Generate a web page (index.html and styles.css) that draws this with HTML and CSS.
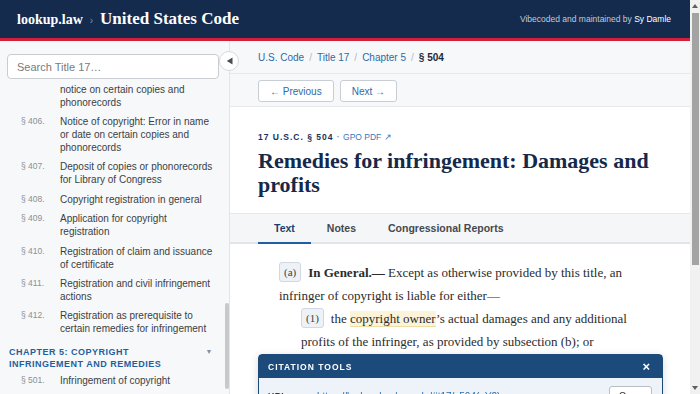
FILE: index.html
```html
<!DOCTYPE html>
<html lang="en">
<head>
  <meta charset="UTF-8" />
  <title>17 U.S.C. § 504 - lookup.law</title>
  <link rel="stylesheet" href="styles.css">
</head>
<body>
  <header class="topbar">
    <div class="brand">
      <a class="site" href="#">lookup.law</a>
      <span class="sep">›</span>
      <span class="code-title">United States Code</span>
    </div>
    <div class="credit">Vibecoded and maintained by <a href="#">Sy Damle</a></div>
  </header>

  <div class="layout">
    <aside class="sidebar">
      <div class="search">
        <input type="text" placeholder="Search Title 17…" />
      </div>
      <button class="collapse" title="Hide sidebar">
        <svg width="8" height="8" viewBox="0 0 8 8"><path d="M6.5 0.5v7L0.8 4z" fill="#4a4f57"/></svg>
      </button>

      <div class="toc" id="toc">
        <div class="chapter closed"><span>Chapter 1: Subject matter and scope of copyright</span><i>▶</i></div>
        <div class="chapter closed"><span>Chapter 2: Copyright ownership and transfer</span><i>▶</i></div>
        <div class="chapter closed"><span>Chapter 3: Duration of copyright</span><i>▶</i></div>
        <div class="chapter"><span>Chapter 4: Copyright notice, deposit, and registration</span><i>▼</i></div>
        <a class="toc-item" href="#"><span class="num">§ 401.</span><span class="name">Notice of copyright: Visually perceptible copies</span></a>
        <a class="toc-item" href="#"><span class="num">§ 402.</span><span class="name">Notice of copyright: Phonorecords of sound recordings</span></a>
        <a class="toc-item" href="#"><span class="num">§ 403.</span><span class="name">Notice of copyright: Publications incorporating United States Government works</span></a>
        <a class="toc-item" href="#"><span class="num">§ 404.</span><span class="name">Notice of copyright: Contributions to collective works</span></a>
        <a class="toc-item" href="#" id="s405"><span class="num">§ 405.</span><span class="name">Notice of copyright: Omission of notice on certain copies and phonorecords</span></a>
        <a class="toc-item" href="#"><span class="num">§ 406.</span><span class="name">Notice of copyright: Error in name or date on certain copies and phonorecords</span></a>
        <a class="toc-item" href="#"><span class="num">§ 407.</span><span class="name">Deposit of copies or phonorecords for Library of Congress</span></a>
        <a class="toc-item" href="#"><span class="num">§ 408.</span><span class="name">Copyright registration in general</span></a>
        <a class="toc-item" href="#"><span class="num">§ 409.</span><span class="name">Application for copyright registration</span></a>
        <a class="toc-item" href="#"><span class="num">§ 410.</span><span class="name">Registration of claim and issuance of certificate</span></a>
        <a class="toc-item" href="#"><span class="num">§ 411.</span><span class="name">Registration and civil infringement actions</span></a>
        <a class="toc-item" href="#"><span class="num">§ 412.</span><span class="name">Registration as prerequisite to certain remedies for infringement</span></a>
        <div class="chapter"><span>Chapter 5: Copyright infringement and remedies</span><i>▼</i></div>
        <a class="toc-item" href="#"><span class="num">§ 501.</span><span class="name">Infringement of copyright</span></a>
        <a class="toc-item" href="#"><span class="num">§ 502.</span><span class="name">Remedies for infringement: Injunctions</span></a>
        <a class="toc-item" href="#"><span class="num">§ 503.</span><span class="name">Remedies for infringement: Impounding and disposition of infringing articles</span></a>
        <a class="toc-item active" href="#"><span class="num">§ 504.</span><span class="name">Remedies for infringement: Damages and profits</span></a>
        <a class="toc-item" href="#"><span class="num">§ 505.</span><span class="name">Remedies for infringement: Costs and attorney's fees</span></a>
        <a class="toc-item" href="#"><span class="num">§ 506.</span><span class="name">Criminal offenses</span></a>
        <a class="toc-item" href="#"><span class="num">§ 507.</span><span class="name">Limitations on actions</span></a>
        <a class="toc-item" href="#"><span class="num">§ 508.</span><span class="name">Notification of filing and determination of actions</span></a>
        <div class="chapter closed"><span>Chapter 6: Importation and exportation</span><i>▶</i></div>
      </div>
      <div class="toc-thumb"></div>
    </aside>

    <main class="content">
      <div class="crumbs">
        <a href="#">U.S. Code</a><span class="slash">/</span>
        <a href="#">Title 17</a><span class="slash">/</span>
        <a href="#">Chapter 5</a><span class="slash">/</span>
        <strong>§ 504</strong>
      </div>

      <div class="pager">
        <button class="btn">← Previous</button>
        <button class="btn">Next →</button>
      </div>

      <div class="section-head">
        <div class="meta">17 U.S.C. § 504 <span class="dot">·</span> <a href="#">GPO PDF ↗</a></div>
        <h1>Remedies for infringement: Damages and profits</h1>
      </div>

      <div class="tabs">
        <a class="tab active" href="#">Text</a>
        <a class="tab" href="#">Notes</a>
        <a class="tab" href="#">Congressional Reports</a>
      </div>

      <div class="statute">
        <p class="para"><span class="mark">(a)</span><b>In General.—</b> Except as otherwise provided by this title, an infringer of copyright is liable for either—</p>
        <p class="para sub"><span class="mark">(1)</span>the <span class="term">copyright owner</span>’s actual damages and any additional profits of the infringer, as provided by subsection (b); or</p>
        <p class="para sub"><span class="mark">(2)</span>statutory damages, as provided by subsection (c).</p>
        <p class="para"><span class="mark">(b)</span><b>Actual Damages and Profits.—</b> The <span class="term">copyright owner</span> is entitled to recover the actual damages suffered by him or her as a result of the infringement, and any profits of the infringer that are attributable to the infringement and are not taken into account in computing the actual damages.</p>
      </div>
    </main>
  </div>

  <div class="cite-panel">
    <div class="cite-head"><span>Citation Tools</span><span class="close">×</span></div>
    <div class="cite-row">
      <span class="cite-label">URL</span>
      <a class="cite-url" href="#">https://lookup.law/uscode/#t17/s504(a)(2)</a>
      <button class="copy">Copy</button>
    </div>
  </div>

  <div class="page-scroll">
    <span class="arrow up"></span>
    <span class="thumb"></span>
    <span class="arrow down"></span>
  </div>

  <script>
    const toc = document.getElementById("toc");
    const start = document.getElementById("s405");
    toc.scrollTop = start.offsetTop + 16;
  </script>
</body>
</html>
```

FILE: styles.css
```css
body {
  margin: 0 10px 0 0;
  font-family: "Liberation Sans", Arial, sans-serif;
  color: #222;
  background: #fff;
}

/* page scrollbar */
.page-scroll {
  position: fixed;
  top: 0;
  right: 0;
  width: 10px;
  height: 100vh;
  z-index: 5;
  background: #f1f1f1;
  display: flex;
  flex-direction: column;
  align-items: center;
}
.page-scroll .arrow {
  width: 0;
  height: 0;
  border-left: 3px solid transparent;
  border-right: 3px solid transparent;
}
.page-scroll .up {
  margin-top: 4px;
  border-bottom: 4px solid #5f5f5f;
}
.page-scroll .down {
  margin-top: auto;
  margin-bottom: 4px;
  border-top: 4px solid #5f5f5f;
}
.page-scroll .thumb {
  width: 7px;
  height: 252px;
  margin-top: 5px;
  background: #a3a3a3;
}

/* header */
.topbar {
  height: 38px;
  background: #152b4e;
  border-bottom: 3px solid #d31f3a;
  display: flex;
  align-items: center;
  justify-content: space-between;
  padding: 0 19px 0 17px;
}
.brand {
  display: flex;
  align-items: baseline;
  font-family: "Liberation Serif", serif;
  font-weight: bold;
  color: #fff;
}
.site {
  font-size: 14px;
  color: #fff;
  text-decoration: none;
}
.sep {
  font-family: "Liberation Sans", sans-serif;
  font-weight: normal;
  font-size: 10px;
  color: #8391a8;
  margin: 0 7px;
}
.code-title {
  font-size: 17px;
}
.credit {
  font-size: 8.5px;
  color: #c3cad6;
}
.credit a {
  color: #fff;
  text-decoration: none;
}

.layout {
  display: flex;
}

/* sidebar */
.sidebar {
  width: 229px;
  flex: none;
  height: calc(100vh - 41px);
  position: sticky;
  top: 0;
  z-index: 2;
  display: flex;
  flex-direction: column;
  background: #f7f8f9;
  border-right: 1px solid #e2e5e9;
}
.search {
  padding: 13px 10px 4px 7px;
}
.search input {
  width: 100%;
  box-sizing: border-box;
  height: 25px;
  padding: 0 9px;
  border: 1px solid #c9cdd2;
  border-radius: 4px;
  background: #fff;
  font: 11px "Liberation Sans", Arial, sans-serif;
  color: #333;
}
.search input::placeholder {
  color: #767b82;
}
.collapse {
  position: absolute;
  top: 10px;
  right: -10px;
  width: 20px;
  height: 20px;
  padding: 0 0 0 1px;
  border: 1px solid #d6dadf;
  border-radius: 50%;
  background: #fff;
  display: flex;
  align-items: center;
  justify-content: center;
}

.toc {
  flex: 1;
  min-height: 0;
  overflow-y: auto;
  position: relative;
  padding: 0 8px 0 7px;
  scrollbar-width: none;
}
.toc-thumb {
  position: absolute;
  right: 0;
  top: 262px;
  width: 4px;
  height: 86px;
  border-radius: 2px;
  background: #c6c9cd;
}

.chapter {
  display: flex;
  justify-content: space-between;
  gap: 10px;
  padding: 7px 8px 1px 2px;
  font-size: 9px;
  line-height: 12px;
  font-weight: bold;
  letter-spacing: 0.5px;
  text-transform: uppercase;
  color: #1f5f9f;
}
.chapter span {
  max-width: 160px;
}
.chapter.closed {
  padding-bottom: 6px;
}
.chapter i {
  font-style: normal;
  font-size: 7px;
  color: #8a8f96;
}

.toc-item {
  display: flex;
  padding: 3.2px 0 3.2px 14px;
  text-decoration: none;
}
.toc-item .num {
  width: 39px;
  flex: none;
  font-size: 8.5px;
  line-height: 13px;
  color: #8a8f96;
}
.toc-item .name {
  width: 156px;
  font-size: 10px;
  line-height: 13px;
  color: #3a3f45;
}
.toc-item.active {
  background: #e3ecf6;
  border-radius: 3px;
}
.toc-item.active .name {
  color: #15294b;
  font-weight: bold;
}

/* main column */
.content {
  flex: 1;
  min-width: 0;
}
.crumbs {
  height: 32px;
  display: flex;
  align-items: center;
  padding: 0 28px;
  background: #f7f8f9;
  border-bottom: 1px solid #e6e8eb;
  font-size: 10px;
}
.crumbs a {
  color: #2e6aa8;
  text-decoration: none;
}
.crumbs .slash {
  color: #b3b8bf;
  margin: 0 5px;
}
.crumbs strong {
  color: #1a2a40;
}

.pager {
  display: flex;
  gap: 6px;
  padding: 6px 28px 4px;
  background: #f7f8f9;
  border-bottom: 1px solid #e6e8eb;
}
.btn {
  height: 22px;
  padding: 0 11px;
  border: 1px solid #c9ced5;
  border-radius: 3px;
  background: #fff;
  color: #2e6aa8;
  font: 10px "Liberation Sans", Arial, sans-serif;
}

.section-head {
  padding: 24px 28px 16px;
}
.meta {
  font-size: 8.5px;
  line-height: 12px;
  font-weight: bold;
  letter-spacing: 1px;
  color: #1b3157;
}
.meta .dot {
  color: #8a8f96;
  letter-spacing: 0;
}
.meta a {
  font-weight: normal;
  letter-spacing: 0;
  color: #3a78b9;
  text-decoration: none;
}
.section-head h1 {
  margin: 6px 0 0;
  font-family: "Liberation Serif", serif;
  font-size: 22px;
  line-height: 24px;
  color: #15294b;
}

.tabs {
  display: flex;
  height: 28px;
  padding: 0 28px;
  background: #f5f6f7;
  border-top: 1px solid #e6e8eb;
  border-bottom: 2px solid #e3e5e8;
}
.tab {
  display: flex;
  align-items: center;
  padding: 0 16px;
  margin-bottom: -2px;
  border-bottom: 2px solid transparent;
  font-size: 10.5px;
  font-weight: bold;
  color: #45494f;
  text-decoration: none;
}
.tab.active {
  color: #1c3c6c;
  border-bottom-color: #1f5ea2;
}

/* statute text */
.statute {
  padding: 18px 28px 60px 49px;
  font-family: "Liberation Serif", serif;
  font-size: 13px;
  line-height: 22.5px;
  color: #2b2b2b;
}
.para {
  margin: 0 0 1px;
}
.para.sub {
  margin-left: 22px;
}
.mark {
  display: inline-block;
  font-size: 11px;
  line-height: 14px;
  padding: 2px 4px;
  margin-right: 7px;
  border: 1px solid #cfd8e3;
  border-radius: 3px;
  background: #eef2f7;
  color: #3a3f45;
  vertical-align: 1px;
}
.term {
  background: #fcf4d9;
  border-bottom: 1px solid #efdca0;
}

/* citation tools */
.cite-panel {
  position: fixed;
  left: 258px;
  top: 354px;
  width: 403px;
  z-index: 3;
  background: #edf3f9;
  border: 1px solid #1d4a79;
  border-radius: 4px 4px 0 0;
  box-shadow: 0 2px 8px rgba(0, 0, 0, 0.15);
}
.cite-head {
  height: 23px;
  display: flex;
  align-items: center;
  justify-content: space-between;
  padding: 0 12px 0 9px;
  background: #1c4a7b;
  color: #fff;
  font-size: 8.5px;
  font-weight: bold;
  letter-spacing: 1px;
  text-transform: uppercase;
}
.cite-head .close {
  font-size: 13px;
  letter-spacing: 0;
}
.cite-row {
  display: flex;
  align-items: center;
  padding: 8px 10px 8px 9px;
  font-size: 10px;
}
.cite-label {
  width: 49px;
  font-weight: bold;
  font-size: 8.5px;
  letter-spacing: 0.5px;
  color: #333;
}
.cite-url {
  flex: 1;
  color: #2e6aa8;
  text-decoration: none;
}
.copy {
  height: 20px;
  padding: 0 9px;
  border: 1px solid #b9bfc7;
  border-radius: 3px;
  background: #fff;
  font: 10px "Liberation Sans", Arial, sans-serif;
  color: #333;
}
```
